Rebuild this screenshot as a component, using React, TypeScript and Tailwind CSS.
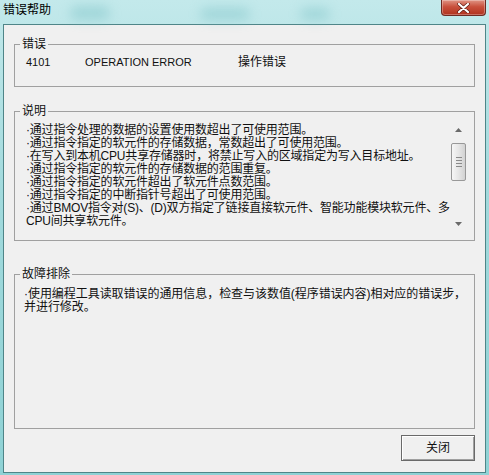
const font = "font-['Liberation_Sans','Noto_Sans_CJK_SC',sans-serif]";

const notes = [
  '·通过指令处理的数据的设置使用数超出了可使用范围。',
  '·通过指令指定的软元件的存储数据，常数超出了可使用范围。',
  '·在写入到本机CPU共享存储器时，将禁止写入的区域指定为写入目标地址。',
  '·通过指令指定的软元件的存储数据的范围重复。',
  '·通过指令指定的软元件超出了软元件点数范围。',
  '·通过指令指定的中断指针号超出了可使用范围。',
  '·通过BMOV指令对(S)、(D)双方指定了链接直接软元件、智能功能模块软元件、多',
  'CPU间共享软元件。',
];

const fixes = ['·使用编程工具读取错误的通用信息，检查与该数值(程序错误内容)相对应的错误步，', '并进行修改。'];

function Arrow({ up }: { up?: boolean }) {
  return (
    <svg width="7" height="4" viewBox="0 0 7 4">
      <path d={up ? 'M0 4 L3.5 0 L7 4 Z' : 'M0 0 L3.5 4 L7 0 Z'} fill="#6a6a6a" />
    </svg>
  );
}

function ScrollBar() {
  return (
    <div className="flex w-[15px] flex-col">
      <div className="flex h-[17px] items-center justify-center">
        <Arrow up />
      </div>
      <div className="flex-1">
        <div className="mt-[5px] flex h-[38px] flex-col items-center justify-center gap-[2px] rounded-[2px] border border-[#989898] bg-[linear-gradient(to_right,#f6f6f6,#e6e6e6_50%,#d2d2d2)]">
          <div className="h-px w-[6px] bg-[#8a8a8a]" />
          <div className="h-px w-[6px] bg-[#8a8a8a]" />
          <div className="h-px w-[6px] bg-[#8a8a8a]" />
          <div className="h-px w-[6px] bg-[#8a8a8a]" />
        </div>
      </div>
      <div className="flex h-[17px] items-center justify-center">
        <Arrow />
      </div>
    </div>
  );
}

function Group({ title, className, children }: { title: string; className: string; children: React.ReactNode }) {
  return (
    <fieldset className={`mx-[10px] border border-[#a0a0a0] p-0 ${className}`}>
      <legend className="ml-[5px] px-[2px] text-[12px] leading-[14px]">{title}</legend>
      {children}
    </fieldset>
  );
}

export default function App() {
  return (
    <div className={`${font} flex h-[475px] w-[489px] flex-col overflow-hidden bg-[linear-gradient(to_bottom,#c3e9eb,#a2dadd_40%,#8fd2d5)] text-[#111]`}>
      {/* Title bar */}
      <div className="relative flex h-[24px] items-start">
        <div className="pointer-events-none absolute left-[70px] top-[6px] h-[14px] w-[40px] rounded-full bg-[#7fc4c8] opacity-50 blur-[6px]" />
        <div className="pointer-events-none absolute left-[200px] top-[8px] h-[12px] w-[50px] rounded-full bg-[#7fc4c8] opacity-50 blur-[6px]" />
        <div className="pointer-events-none absolute left-[300px] top-[8px] h-[12px] w-[30px] rounded-full bg-[#7fc4c8] opacity-50 blur-[6px]" />
        <span className="relative pl-[3px] pt-[3px] text-[12px] leading-[14px] text-black">错误帮助</span>
        <div className="relative ml-auto mr-[3px] flex h-[16px] w-[45px] items-center justify-center rounded-b-[4px] border border-t-0 border-[#6e2a22] bg-[linear-gradient(to_bottom,#e09484,#c9503c_45%,#b0321f)] shadow-[inset_0_0_0_1px_rgba(255,255,255,0.3)]">
          <svg width="13" height="10" viewBox="0 0 13 10">
            <path d="M2 1 L11 9 M11 1 L2 9" stroke="#5a1a12" strokeWidth="3.4" strokeLinecap="round" />
            <path d="M2 1 L11 9 M11 1 L2 9" stroke="#ffffff" strokeWidth="2.2" strokeLinecap="round" />
          </svg>
        </div>
      </div>

      {/* Client area */}
      <div className="mx-[3px] flex h-[449px] flex-col border border-[#4f8588] bg-[#f0f0f0]">
        <Group title="错误" className="mt-[12px] h-[50px]">
          <div className="mt-[4px] flex pl-[11px] text-[12px] leading-[14px]">
            <span className="w-[59px] text-[11px]">4101</span>
            <span className="w-[153px] text-[11px]">OPERATION ERROR</span>
            <span>操作错误</span>
          </div>
        </Group>

        <Group title="说明" className="mt-[17px] h-[137px]">
          <div className="ml-[9px] mr-[8px] mt-[3px] flex h-[111px]">
            <div className="flex-1 pl-[2px] pt-[2.5px] text-[12px] leading-[13px] tracking-[-0.2px]">
              {notes.map((line) => (
                <div key={line} className="whitespace-nowrap">
                  {line}
                </div>
              ))}
            </div>
            <ScrollBar />
          </div>
        </Group>

        <Group title="故障排除" className="mt-[26px] h-[162px]">
          <div className="ml-[9px] mt-[7px] text-[12px] leading-[13px] tracking-[-0.05px]">
            {fixes.map((line) => (
              <div key={line} className="whitespace-nowrap">
                {line}
              </div>
            ))}
          </div>
        </Group>

        <button className="mr-[10px] mt-[6px] h-[26px] w-[74px] self-end border border-[#6a6a6a] bg-[#f0f0f0] text-[12px] shadow-[inset_1px_1px_0_#ffffff,inset_-1px_-1px_0_#a0a0a0]">
          关闭
        </button>
      </div>
    </div>
  );
}
